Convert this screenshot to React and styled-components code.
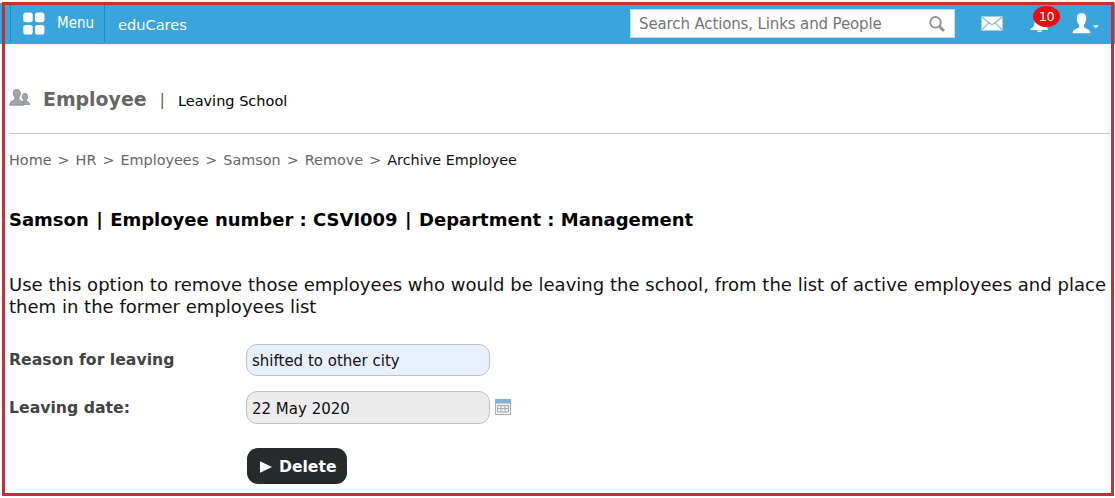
import React from "react";
import styled, { createGlobalStyle } from "styled-components";

const Global = createGlobalStyle`
  * { box-sizing: border-box; }
  body { margin: 0; background: #fff; font-family: Verdana, "DejaVu Sans", sans-serif; overflow: hidden; }
`;

const Page = styled.div`
  position: relative;
  height: 498px;
  padding-top: 3px;
`;

const Frame = styled.div`
  position: absolute;
  inset: 2px 1px 2px 2px;
  border: 3px solid #c0303a;
  pointer-events: none;
`;

const TopBar = styled.header`
  display: flex;
  align-items: center;
  height: 41px;
  background: #3aa5dc;
  color: #fff;
  padding-left: 10px;
`;

const MenuButton = styled.div`
  display: flex;
  align-items: center;
  height: 39px;
  width: 95px;
  padding: 1px 0 0 12px;
  margin-bottom: 2px;
  border: solid #2687b8;
  border-width: 0 1px;
  gap: 12px;
  font: 15px/20px "DejaVu Sans Condensed", "DejaVu Sans", sans-serif;
`;

const Brand = styled.div`
  flex: 1;
  padding: 2px 0 0 13px;
  font-size: 14.6px;
  line-height: 20px;
`;

const SearchBox = styled.div`
  display: flex;
  align-items: center;
  justify-content: space-between;
  width: 325px;
  height: 29px;
  padding: 0 8px 0 8px;
  border: 1px solid #c5dfee;
  background: #fff;
  color: #757575;
  font-size: 15px;
  letter-spacing: -0.13px;
  white-space: nowrap;
`;

const Actions = styled.div`
  display: flex;
  align-items: center;
  width: 160px;
  padding-left: 26px;
`;

const Bell = styled.div`
  position: relative;
  margin: 0 22px 0 27px;
  height: 20px;
`;

const Badge = styled.span`
  position: absolute;
  left: 3px;
  top: -8px;
  width: 27px;
  height: 21px;
  border-radius: 50%;
  background: #ee0a0e;
  font: 13px/21px Verdana, "DejaVu Sans", sans-serif;
  letter-spacing: -0.4px;
  text-align: center;
`;

const Content = styled.main`
  padding: 41px 5px 0 9px;
`;

const Heading = styled.div`
  display: flex;
  align-items: center;
  height: 49px;
  padding-bottom: 20px;
  border-bottom: 1px solid #c6c6c6;
`;

const Title = styled.h1`
  margin: 0 13px 0 12px;
  font-size: 18.9px;
  line-height: 28px;
  color: #666;
`;

const Divider = styled.span`
  color: #666;
  font-size: 16px;
  margin-right: 13px;
`;

const Subtitle = styled.span`
  font-size: 14.5px;
  line-height: 20px;
  padding-top: 4px;
`;

const Breadcrumb = styled.nav`
  display: flex;
  gap: 6px;
  margin-top: 16px;
  font-size: 14.4px;
  line-height: 20px;
  color: #666;
`;

const Current = styled.span`
  color: #111;
`;

const Summary = styled.h2`
  margin: 38px 0 0;
  font-size: 18px;
  letter-spacing: -0.01px;
  line-height: 24px;
  color: #000;
`;

const Pipe = styled.span`
  margin: 0 1.2px;
`;

const Intro = styled.p`
  margin: 42px 0 0;
  font-size: 18px;
  letter-spacing: 0.02px;
  line-height: 22px;
  color: #111;
  white-space: nowrap;
`;

const Row = styled.div`
  display: flex;
  align-items: center;
  height: ${(p) => p.$height}px;
  margin-top: ${(p) => p.$gap}px;
`;

const Label = styled.label`
  width: 237px;
  padding-bottom: ${(p) => p.$lift || 0}px;
  font-weight: bold;
  font-size: 15.7px;
  color: #444;
`;

const Field = styled.div`
  display: flex;
  align-items: center;
  width: 244px;
  height: 100%;
  padding: 2px 5px 0;
  margin-right: 5px;
  border: 1px solid #c3c3c6;
  border-radius: 11px;
  background: ${(p) => (p.$disabled ? "#ececec" : "#e8effd")};
  color: #111;
  font-size: 15px;
`;

const CalendarButton = styled.span`
  display: flex;
  padding-bottom: 2px;
`;

const DeleteButton = styled.button`
  display: flex;
  align-items: center;
  gap: 7px;
  width: 100px;
  height: 36px;
  margin: 24px 0 0 238px;
  padding: 1px 0 0 13px;
  border: 0;
  border-radius: 11px;
  background: #272a2b;
  color: #fff;
  font: bold 15.6px/20px Verdana, "DejaVu Sans", sans-serif;
`;

const GridIcon = () => (
  <svg width="22" height="23" viewBox="0 0 22 23" fill="#fff">
    <rect x="0.3" y="0.6" width="9.4" height="9.6" rx="2.6" />
    <rect x="12" y="0.6" width="9.4" height="9.6" rx="2.6" />
    <rect x="0.3" y="12.9" width="9.4" height="9.6" rx="2.6" />
    <rect x="12" y="12.9" width="9.4" height="9.6" rx="2.6" />
  </svg>
);

const SearchIcon = () => (
  <svg width="18" height="18" viewBox="0 0 18 18" fill="none" stroke="#929292">
    <circle cx="7.5" cy="7.3" r="5.3" strokeWidth="1.9" />
    <path d="M11.5 11.5L16 16" strokeWidth="3" />
  </svg>
);

const MailIcon = () => (
  <svg width="22" height="15" viewBox="0 0 22 15">
    <rect x="0.5" y="0.5" width="21" height="14" fill="#fff" />
    <path d="M1 1.2L11 9L21 1.2M1 13.8L8 6.8M21 13.8L14 6.8" fill="none" stroke="#8fb9d0" strokeWidth="1.3" />
  </svg>
);

const BellIcon = () => (
  <svg width="20" height="20" viewBox="0 0 20 20" fill="#fff">
    <path d="M10 1C5.6 1 4.5 4 4.5 8C4.5 12 3.5 13.2 0.6 14.8V16H18V14.8C16 13.2 15.5 12 15.5 8C15.5 4 14.4 1 10 1Z" />
    <path d="M6.5 16.6H12.5Q11.5 18.2 9.5 18.2Q7.5 18.2 6.5 16.6Z" />
  </svg>
);

const UserIcon = () => (
  <svg width="28" height="22" viewBox="0 0 28 22" fill="#fff">
    <path d="M9.5 0.3C6 0.3 4.6 2.5 4.8 5.7C4.9 8.5 5.8 10.3 7 11.8V14.2C5.5 15.8 1 15.6 0.5 20.2H18.5C18 15.6 13.5 15.8 12 14.2V11.8C13.2 10.3 14.1 8.5 14.2 5.7C14.4 2.5 13 0.3 9.5 0.3Z" />
    <path d="M20.5 12.2H27L23.8 15.2Z" opacity="0.85" />
  </svg>
);

const PeopleIcon = () => (
  <svg width="22" height="20" viewBox="0 0 22 20" fill="#a0a3a8" stroke="#85898f" strokeWidth="0.8">
    <path d="M16 4.5C13.6 4.5 13 6.3 13.4 8.4C13.6 9.5 14 10 14.4 10.6V12L12 13.5V15.5H20.8C20.8 13.7 19.8 13.4 17.5 12.2V10.6C18.3 9.8 18.6 9 18.6 7.5C18.6 5.6 17.8 4.5 16 4.5Z" />
    <path d="M7.7 0.4C5 0.4 4 2.3 4.3 4.9C4.5 6.5 5 7.3 5.8 8.1V10.4C4 12.1 1 11.7 0.8 16.2H15C14.7 11.7 11.6 12.1 9.8 10.4V8.1C10.6 7.3 11.1 6.5 11.3 4.9C11.5 2.3 10.4 0.4 7.7 0.4Z" />
  </svg>
);

const CalendarIcon = () => (
  <svg width="16" height="16" viewBox="0 0 16 16">
    <rect x="0.5" y="0.5" width="15" height="15" fill="#f2f4f6" stroke="#a9afb4" />
    <rect x="0" y="0" width="16" height="4.5" fill="#7fb0d6" />
    <path d="M2.5 6.5H13.5M2.5 9.5H13.5M2.5 13H13.5M2.5 6.5V13M6 6.5V13M10 6.5V13M13.5 6.5V13" fill="none" stroke="#a4aab2" />
  </svg>
);

const PlayIcon = () => (
  <svg width="12" height="12" viewBox="0 0 12 12" fill="#fff">
    <path d="M0 0.3L12 6L0 11.7Z" />
  </svg>
);

const trail = ["Home", "HR", "Employees", "Samson", "Remove"];

export default function App() {
  return (
    <>
      <Global />
      <Page>
        <TopBar>
          <MenuButton><GridIcon /><span>Menu</span></MenuButton>
          <Brand>eduCares</Brand>
          <SearchBox><span>Search Actions, Links and People</span><SearchIcon /></SearchBox>
          <Actions>
            <MailIcon />
            <Bell><BellIcon /><Badge>10</Badge></Bell>
            <UserIcon />
          </Actions>
        </TopBar>
        <Content>
          <Heading>
            <PeopleIcon />
            <Title>Employee</Title>
            <Divider>|</Divider>
            <Subtitle>Leaving School</Subtitle>
          </Heading>
          <Breadcrumb>
            {trail.map((t) => (
              <React.Fragment key={t}><span>{t}</span><span>&gt;</span></React.Fragment>
            ))}
            <Current>Archive Employee</Current>
          </Breadcrumb>
          <Summary>
            Samson <Pipe>|</Pipe> Employee number : CSVI009 <Pipe>|</Pipe> Department : Management
          </Summary>
          <Intro>
            Use this option to remove those employees who would be leaving the school, from the list of active employees and place<br />
            them in the former employees list
          </Intro>
          <Row $height={32} $gap={26}><Label $lift={1}>Reason for leaving</Label><Field>shifted to other city</Field></Row>
          <Row $height={33} $gap={15}><Label>Leaving date:</Label><Field $disabled>22 May 2020</Field><CalendarButton><CalendarIcon /></CalendarButton></Row>
          <DeleteButton><PlayIcon />Delete</DeleteButton>
        </Content>
        <Frame />
      </Page>
    </>
  );
}
